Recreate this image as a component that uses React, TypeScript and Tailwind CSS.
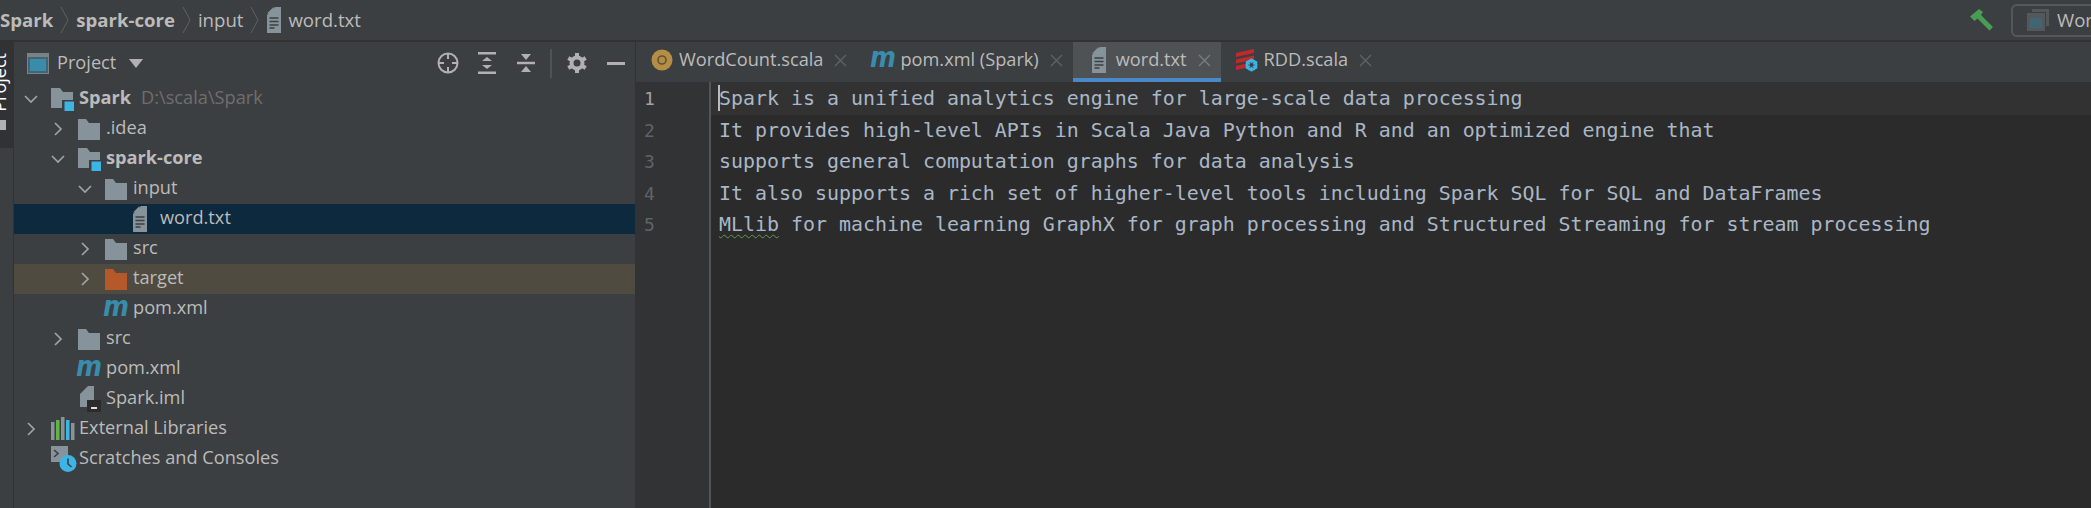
import { FC, ReactNode } from "react";

const uiFont = "font-['Open_Sans','Noto_Sans',sans-serif]";

const FolderIcon: FC<{ color?: string }> = ({ color = "#87939a" }) => (
  <svg width="22" height="22" viewBox="0 0 22 22" className="shrink-0">
    <path d="M0 1h8l3 4h11v17H0z" fill={color} />
  </svg>
);

const ModuleFolderIcon: FC = () => (
  <svg width="24" height="24" viewBox="0 0 24 24" className="shrink-0 -mt-[1px]">
    <path d="M0 1h9l3 4h10v16H0z" fill="#87939a" />
    <rect x="11" y="13" width="13" height="11" fill="#3c3f41" />
    <rect x="13.500" y="14.500" width="9.500" height="9.500" fill="#3cb4e5" />
  </svg>
);

const TextFileIcon: FC = () => (
  <svg width="16" height="26" viewBox="0 0 16 26" className="shrink-0">
    <path d="M9 0h6v26H1V8z" fill="#87939a" />
    <path d="M1 6.500 7.500 0v6.500z" fill="#87939a" />
    <path d="M3.500 11h9M3.500 14.500h9M3.500 18h9M3.500 21h5" stroke="#3c3f41" strokeWidth="1.600" />
  </svg>
);

const MavenIcon: FC = () => (
  <span className="w-[22px] h-[24px] shrink-0 flex items-center justify-center font-['DejaVu_Sans',sans-serif] text-[29px] leading-none font-bold italic text-[#3a8cad] -translate-y-[3px] scale-x-[0.86]">
    m
  </span>
);

const ImlIcon: FC = () => (
  <svg width="24" height="26" viewBox="0 0 24 26" className="shrink-0">
    <path d="M10 0h6v21H2V8z" fill="#87939a" />
    <rect x="9" y="14" width="14" height="12" fill="#2b2b2b" />
    <rect x="13" y="21" width="6" height="2" fill="#dddddd" />
  </svg>
);

const LibrariesIcon: FC = () => (
  <svg width="24" height="24" viewBox="0 0 24 24" className="shrink-0">
    <rect x="0" y="5" width="3.500" height="18" fill="#87939a" />
    <rect x="5" y="3" width="3.500" height="20" fill="#62b543" />
    <rect x="10" y="0" width="3.500" height="23" fill="#87939a" />
    <rect x="15" y="3" width="3.500" height="20" fill="#3cb4e5" />
    <rect x="20" y="6" width="3.500" height="17" fill="#87939a" />
  </svg>
);

const ScratchesIcon: FC = () => (
  <svg width="26" height="26" viewBox="0 0 26 26" className="shrink-0">
    <path d="M0 0h17v9l-6 7H0z" fill="#87939a" />
    <path d="m3 4 4 3.500L3 11" fill="none" stroke="#3c3f41" strokeWidth="1.600" />
    <circle cx="17" cy="17.500" r="8.500" fill="#3cb4e5" />
    <path d="M17 12.500V18l3.500 3" fill="none" stroke="#3c3f41" strokeWidth="1.600" />
  </svg>
);

const ScalaObjectIcon: FC = () => (
  <svg width="22" height="22" viewBox="0 0 22 22" className="shrink-0">
    <circle cx="11" cy="11" r="10.500" fill="#b48e45" />
    <circle cx="11" cy="11" r="4" fill="none" stroke="#5e5238" strokeWidth="1.600" />
  </svg>
);

const RddIcon: FC = () => (
  <svg width="22" height="24" viewBox="0 0 22 24" className="shrink-0">
    <path d="M0 5 18 1v4L0 9zM0 11.500 18 7.500v4l-18 4zM0 18l10-2.300v4L0 22z" fill="#c1292b" />
    <circle cx="15.500" cy="17" r="4.500" fill="none" stroke="#3cb4e5" strokeWidth="3" />
    <path d="M15.500 10.500v13M9.800 13.800l11.400 6.400M9.800 20.200l11.400-6.400" stroke="#3cb4e5" strokeWidth="1.800" />
    <circle cx="15.500" cy="17" r="2" fill="#3c3f41" />
  </svg>
);

const Chevron: FC<{ open?: boolean }> = ({ open }) => (
  <svg width="14" height="14" viewBox="0 0 14 14" className="shrink-0">
    <path
      d={open ? "M1 4l6 6 6-6" : "M4 1l6 6-6 6"}
      fill="none"
      stroke="#a0a3a5"
      strokeWidth="1.700"
    />
  </svg>
);

const Row: FC<{
  indent: string;
  chevron?: "open" | "closed";
  icon: ReactNode;
  rowClass?: string;
  children: ReactNode;
}> = ({ indent, chevron, icon, rowClass = "", children }) => (
  <div className={`h-[30px] flex items-center text-[18.200px] text-[#bbbbbb] whitespace-nowrap ${indent} ${rowClass}`}>
    <span className="w-[27px] shrink-0 flex">{chevron && <Chevron open={chevron === "open"} />}</span>
    <span className="w-[28px] shrink-0 flex">{icon}</span>
    <span className="-translate-y-[1px]">{children}</span>
  </div>
);

const Tab: FC<{ icon: ReactNode; label: string; active?: boolean }> = ({ icon, label, active }) => (
  <div
    className={`h-[40px] flex items-center pl-[15px] pr-[10px] border-b-[4px] text-[18.200px] text-[#bbbbbb] whitespace-nowrap ${
      active ? "bg-[#4e5254] border-[#4a88c7]" : "border-transparent"
    }`}
  >
    <span className="w-[22px] mr-[6px] shrink-0 flex justify-center">{icon}</span>
    {label}
    <svg width="13" height="13" viewBox="0 0 13 13" className="ml-[11px] shrink-0">
      <path d="M1 1l11 11M12 1 1 12" stroke={active ? "#7a7d7f" : "#606366"} strokeWidth="1.300" />
    </svg>
  </div>
);

const Crumb: FC = () => (
  <svg width="9" height="28" viewBox="0 0 9 28" className="mx-[7px] shrink-0">
    <path d="M1 1l7 13-7 13" fill="none" stroke="#5e6163" strokeWidth="1" />
  </svg>
);

const editorLines = [
  "It provides high-level APIs in Scala Java Python and R and an optimized engine that",
  "supports general computation graphs for data analysis",
  "It also supports a rich set of higher-level tools including Spark SQL for SQL and DataFrames",
];

export default function App() {
  return (
    <div className={`w-[2091px] h-[508px] overflow-hidden bg-[#3c3f41] flex flex-col ${uiFont}`}>
      {/* navigation bar */}
      <div className="h-[42px] shrink-0 flex items-center justify-between border-b-2 border-[#323232] text-[18.600px] text-[#bbbbbb]">
        <div className="flex items-center whitespace-nowrap">
          <span className="font-bold">Spark</span>
          <Crumb />
          <span className="font-bold">spark-core</span>
          <Crumb />
          <span>input</span>
          <Crumb />
          <span className="mr-[6px] flex"><TextFileIcon /></span>
          <span>word.txt</span>
        </div>
        <div className="flex items-center -mr-[60px]">
          <svg width="24" height="22" viewBox="0 0 24 22" className="mr-[17px]">
            <path d="M0 7.500 9 0l4 3-2 3 12 12-3.500 3.500L7.500 9.500 4.500 12z" fill="#499c54" />
          </svg>
          <div className="h-[33px] w-[140px] flex items-center pl-[14px] border-2 border-[#55585a] rounded-[6px]">
            <svg width="22" height="22" viewBox="0 0 22 22" className="mr-[8px] shrink-0">
              <path d="M5 3V0h17v17h-3V3z" fill="#55585a" />
              <rect x="0" y="4" width="18" height="18" fill="#55585a" />
              <rect x="3" y="9" width="12" height="10" fill="#3f6672" />
            </svg>
            WordCount
          </div>
        </div>
      </div>

      <div className="flex-1 flex min-h-0">
        {/* tool window strip */}
        <div className="w-[14px] shrink-0 border-r border-[#323232]">
          <div className="h-[106px] bg-[#303234] overflow-hidden relative">
            <span className="absolute left-[-11px] top-[11px] [writing-mode:vertical-rl] rotate-180 text-[18px] leading-[20px] text-white">
              Project
            </span>
            <span className="absolute left-0 top-[78px] w-[6px] h-[10px] bg-[#afb1b3]" />
          </div>
        </div>

        {/* project panel */}
        <div className="w-[622px] shrink-0 border-r border-[#323232]">
          <div className="h-[42px] flex items-center text-[18.200px] text-[#bbbbbb]">
            <svg width="22" height="21" viewBox="0 0 22 21" className="ml-[13px] mr-[8px]">
              <rect x="0.500" y="0.500" width="21" height="20" fill="#3f6672" stroke="#7b8286" />
              <rect x="1" y="1" width="20" height="3" fill="#7b8286" />
              <rect x="3" y="6" width="16" height="12" fill="#3b8baa" />
            </svg>
            Project
            <svg width="14" height="9" viewBox="0 0 14 9" className="ml-[13px]">
              <path d="M0 0h14L7 9z" fill="#afb1b3" />
            </svg>
            <div className="ml-auto flex items-center mr-[10px]">
              <svg width="22" height="22" viewBox="0 0 22 22" className="mr-[19px]">
                <circle cx="11" cy="11" r="9.500" fill="none" stroke="#afb1b3" strokeWidth="2" />
                <path d="M11 1v6M11 15v6M1 11h6M15 11h6" stroke="#afb1b3" strokeWidth="2" />
              </svg>
              <svg width="18" height="22" viewBox="0 0 18 22" className="mr-[21px]">
                <path d="M0 1h18M0 21h18" stroke="#afb1b3" strokeWidth="3" />
                <path d="M9 5l5 4H4zM9 17l5-4H4z" fill="#afb1b3" />
              </svg>
              <svg width="18" height="20" viewBox="0 0 18 20" className="mr-[15px]">
                <path d="M0 10h18" stroke="#afb1b3" strokeWidth="2.500" />
                <path d="M9 7 4 1h10zM9 13l5 6H4z" fill="#afb1b3" />
              </svg>
              <div className="w-[2px] h-[29px] bg-[#505254] mr-[15px]" />
              <svg width="20" height="20" viewBox="0 0 20 20" className="mr-[20px]">
                <circle cx="10" cy="10" r="5.500" fill="none" stroke="#afb1b3" strokeWidth="4" />
                <path d="M10 0v4M10 16v4M1.300 5l3.500 2M15.200 13l3.500 2M1.300 15l3.500-2M15.200 7l3.500-2" stroke="#afb1b3" strokeWidth="4" />
              </svg>
              <div className="w-[18px] h-[3px] bg-[#afb1b3]" />
            </div>
          </div>

          <Row indent="pl-[10px]" chevron="open" icon={<ModuleFolderIcon />}>
            <span className="font-bold">Spark</span>
            <span className="ml-[10px] text-[#6e6e6e]">D:\scala\Spark</span>
          </Row>
          <Row indent="pl-[37px]" chevron="closed" icon={<FolderIcon />}>.idea</Row>
          <Row indent="pl-[37px]" chevron="open" icon={<ModuleFolderIcon />}>
            <span className="font-bold">spark-core</span>
          </Row>
          <Row indent="pl-[64px]" chevron="open" icon={<FolderIcon />}>input</Row>
          <Row indent="pl-[91px]" rowClass="bg-[#0d293e]" icon={<TextFileIcon />}>word.txt</Row>
          <Row indent="pl-[64px]" chevron="closed" icon={<FolderIcon />}>src</Row>
          <Row indent="pl-[64px]" chevron="closed" rowClass="bg-[#4f4b41]" icon={<FolderIcon color="#b5592b" />}>target</Row>
          <Row indent="pl-[64px]" icon={<MavenIcon />}>pom.xml</Row>
          <Row indent="pl-[37px]" chevron="closed" icon={<FolderIcon />}>src</Row>
          <Row indent="pl-[37px]" icon={<MavenIcon />}>pom.xml</Row>
          <Row indent="pl-[37px]" icon={<ImlIcon />}>Spark.iml</Row>
          <Row indent="pl-[10px]" chevron="closed" icon={<LibrariesIcon />}>External Libraries</Row>
          <Row indent="pl-[10px]" icon={<ScratchesIcon />}>Scratches and Consoles</Row>
        </div>

        {/* editor */}
        <div className="flex-1 flex flex-col min-w-0">
          <div className="h-[40px] shrink-0 flex">
            <Tab icon={<ScalaObjectIcon />} label="WordCount.scala" />
            <Tab icon={<MavenIcon />} label="pom.xml (Spark)" />
            <Tab icon={<TextFileIcon />} label="word.txt" active />
            <Tab icon={<RddIcon />} label="RDD.scala" />
          </div>
          <div className="flex-1 flex bg-[#2b2b2b] font-['DejaVu_Sans_Mono',monospace] text-[19.930px] leading-[31.500px] whitespace-nowrap">
            <div className="w-[75px] shrink-0 bg-[#313335] border-r-2 border-[#555555] pl-[8px] text-[#606366] text-[18px]">
              <div className="text-[#a4a3a3] pt-[1px]">1</div>
              <div>2</div>
              <div>3</div>
              <div>4</div>
              <div>5</div>
            </div>
            <div className="flex-1 text-[#a9b7c6]">
              <div className="bg-[#323232] pl-[8px] pt-[1px] relative">
                <span className="absolute left-[7px] top-[3px] w-[2px] h-[26px] bg-[#bbbbbb]" />
                Spark is a unified analytics engine for large-scale data processing
              </div>
              {editorLines.map((line, index) => (
                <div key={index} className="pl-[8px]">{line}</div>
              ))}
              <div className="pl-[8px]">
                <span className="underline decoration-wavy decoration-[#629755] decoration-1 underline-offset-[3px]">MLlib</span>
                {" for machine learning GraphX for graph processing and Structured Streaming for stream processing"}
              </div>
            </div>
          </div>
        </div>
      </div>
    </div>
  );
}
